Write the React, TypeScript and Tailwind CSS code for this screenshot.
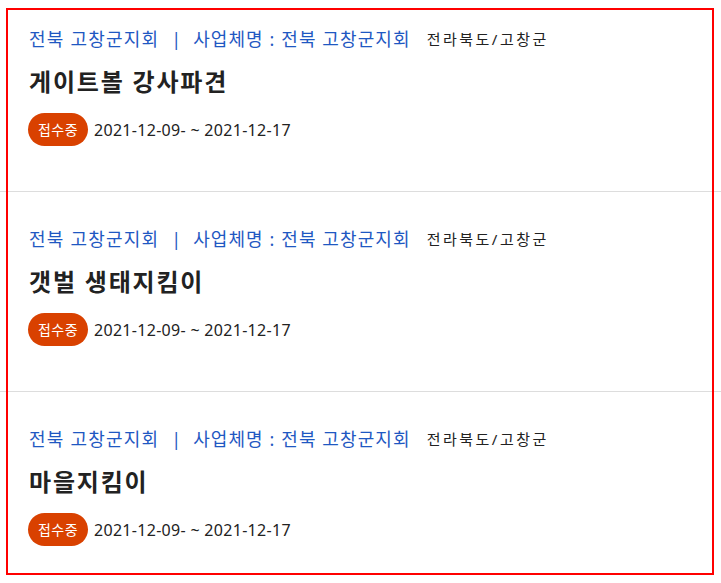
const items = [
  { title: '게이트볼 강사파견' },
  { title: '갯벌 생태지킴이' },
  { title: '마을지킴이' },
];

const fontStack = "font-['Noto_Sans','Noto_Sans_CJK_KR',sans-serif]";

const ProgramItem = ({ title, first }: { title: string; first?: boolean }) => {
  return (
    <li className={`border-b border-[#dddddd] pl-[29px] pb-[45px] ${first ? 'pt-[26px]' : 'pt-[34px]'}`}>
      <div className="flex items-center h-[27px] text-[18px] leading-[27px] text-[#1f58c2]">
        <span className="tracking-[1.2px]">전북 고창군지회</span>
        <span className="mx-[12px]">|</span>
        <span className="tracking-[1.1px]">사업체명 : 전북 고창군지회</span>
        <span className="ml-[16px] text-[15px] tracking-[2.5px] text-[#222222]">전라북도/고창군</span>
      </div>
      <h3 className="mt-[13px] text-[24px] leading-[32px] font-bold tracking-[1.8px] text-[#222222]">{title}</h3>
      <div className="mt-[15px] flex items-center gap-[6px]">
        <span className="flex h-[33px] w-[60px] -ml-px items-center justify-center rounded-full bg-[#d94100] text-[14px] tracking-[0.5px] text-white">
          접수중
        </span>
        <span className="text-[16px] tracking-[0.3px] text-[#222222]">2021-12-09- ~ 2021-12-17</span>
      </div>
    </li>
  );
};

export default function App() {
  return (
    <div className={`relative h-[583px] w-[721px] overflow-hidden bg-white ${fontStack}`}>
      <ul>
        {items.map((item, i) => (
          <ProgramItem key={item.title} title={item.title} first={i === 0} />
        ))}
      </ul>
      {/* 선택 영역 표시 */}
      <div className="pointer-events-none absolute left-[6px] top-[8px] h-[567px] w-[708px] border-[2.5px] border-[#ff0000]" />
    </div>
  );
}
